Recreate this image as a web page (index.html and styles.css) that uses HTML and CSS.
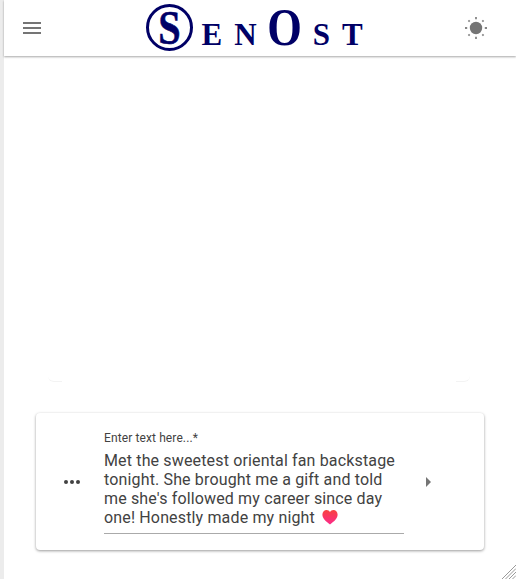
FILE: index.html
```html
<!DOCTYPE html>
<html lang="en">
<head>
<meta charset="utf-8">
<title>SenOst</title>
<link rel="stylesheet" href="styles.css">
</head>
<body>
<div class="app">
  <div class="rail"></div>
  <main class="main">
    <header class="topbar">
      <svg class="icon grey" viewBox="0 0 24 24" aria-label="Menu"><path d="M3 18h18v-2H3v2zm0-5h18v-2H3v2zm0-7v2h18V6H3z"/></svg>
      <div class="logo" aria-label="SenOst">
        <span class="logo-ring"><span class="logo-s">S</span></span>
        <span class="logo-l e">E</span>
        <span class="logo-l n">N</span>
        <span class="logo-o">O</span>
        <span class="logo-l s">S</span>
        <span class="logo-l t">T</span>
      </div>
      <svg class="icon grey" viewBox="0 0 24 24" aria-label="Theme">
        <circle cx="12" cy="12" r="6.200"/>
        <g class="rays">
          <path d="M12 1v2.200M12 20.800V23M1 12h2.200M20.800 12H23M4.400 4.400l1.300 1.300M18.300 18.300l1.300 1.300M4.400 19.600l1.300-1.300M18.300 5.700l1.300-1.300"/>
        </g>
      </svg>
    </header>
    <section class="stage">
      <div class="ghost"></div>
    </section>
    <section class="composer">
      <svg class="icon dark" viewBox="0 0 24 24" aria-label="More"><circle cx="6" cy="12" r="2"/><circle cx="12" cy="12" r="2"/><circle cx="18" cy="12" r="2"/></svg>
      <div class="field">
        <div class="field-label">Enter text here...*</div>
        <div class="field-text">Met the sweetest oriental fan backstage tonight. She brought me a gift and told me she's followed my career since day one! Honestly made my night <svg class="heart" viewBox="0 0 16 16" role="img" aria-label="heart"><defs><linearGradient id="hg" x1="0" y1="0" x2="0" y2="1"><stop offset="0" stop-color="#f8423f"/><stop offset="1" stop-color="#fb2b8c"/></linearGradient></defs><path fill="url(#hg)" d="M8 15.6C3.6 12.3.4 9.4.4 5.6.4 2.9 2.4 1 4.6 1 6 1 7.300 1.700 8 3c.7-1.300 2-2 3.400-2 2.200 0 4.200 1.900 4.200 4.600 0 3.800-3.200 6.700-7.600 10z"/></svg></div>
      </div>
      <svg class="icon grey" viewBox="0 0 24 24" aria-label="Send"><path d="m10 17 5-5-5-5v10z"/></svg>
    </section>
  </main>
</div>
<svg class="grip" viewBox="0 0 14 14" aria-hidden="true"><path d="M0 14 14 0M3.500 14 14 3.500M7 14l7-7M10.500 14l3.500-3.500"/></svg>
</body>
</html>
```
FILE: styles.css
```css
* { box-sizing: border-box; }
html, body { margin: 0; height: 100%; background: #fff; overflow: hidden; }
body { font-family: Roboto, "Noto Sans", sans-serif; color: #424242; position: relative; }
.app { display: flex; height: 579px; }
.rail { width: 4px; background: #ececec; flex: none; }
.main { flex: 1; min-width: 0; display: flex; flex-direction: column; }
.icon { width: 24px; height: 24px; flex: none; display: block; }
.grey { fill: #757575; }
.dark { fill: #424242; }
.rays path { fill: none; stroke: #858585; stroke-width: 1.800; }
.topbar {
  height: 56px; flex: none; display: flex; align-items: center; justify-content: space-between;
  padding: 0 28px 0 16px; background: #fff; box-shadow: 0 1px 2px rgba(0,0,0,.35);
  position: relative;
}
.logo {
  display: flex; align-items: flex-end; height: 56px; width: 217px;
  font-family: "Liberation Serif", serif; font-weight: 700; color: #000066;
}
.logo-ring {
  width: 47px; height: 47px; border: 3px solid #000066; border-radius: 50%; flex: none;
  display: flex; align-items: center; justify-content: center; margin-bottom: 5px;
}
.logo-s { font-size: 48px; line-height: 42px; transform: scaleX(.84); -webkit-text-stroke: .6px #000066; }
.logo-l { font-size: 31px; line-height: 31px; margin-bottom: 6px; }
.logo-o { font-size: 53px; line-height: 53px; margin-bottom: 2px; transform: scaleX(.84); }
.e { margin-left: 9px; }
.n { margin-left: 12px; }
.logo-o { margin-left: 7px; margin-right: -6px; }
.s { margin-left: 14px; }
.t { margin-left: 12px; }
.stage { flex: 1; min-height: 0; padding: 0 46px 31px 44px; display: flex; align-items: flex-end; }
.ghost { width: 100%; height: 10px; position: relative; }
.ghost::before, .ghost::after {
  content: ""; position: absolute; bottom: 0; width: 14px; height: 8px; border-bottom: 1px solid #f3f3f3;
}
.ghost::before { left: 0; border-bottom-left-radius: 6px; }
.ghost::after { right: 0; border-bottom-right-radius: 6px; }
.composer {
  margin: 0 32px 29px; height: 137px; flex: none; background: #fff; border-radius: 4px;
  box-shadow: 0 1px 3px rgba(0,0,0,.4); display: flex; align-items: center;
  padding: 0 44px 0 24px;
}
.field { width: 300px; margin: 18px 12px 0 20px; flex: none; height: 103px; border-bottom: 1px solid #aaa; align-self: flex-start; }
.field-label { font-size: 12px; line-height: 14px; letter-spacing: .11px; }
.field-text { font-size: 16px; line-height: 19px; margin-top: 6px; letter-spacing: .15px; }
.heart { width: 16px; height: 16px; vertical-align: -2px; margin-left: 3px; }
.grip { position: absolute; right: 0; bottom: 0; width: 14px; height: 14px; fill: none; stroke: #9a9a9a; stroke-width: 1; }
```
